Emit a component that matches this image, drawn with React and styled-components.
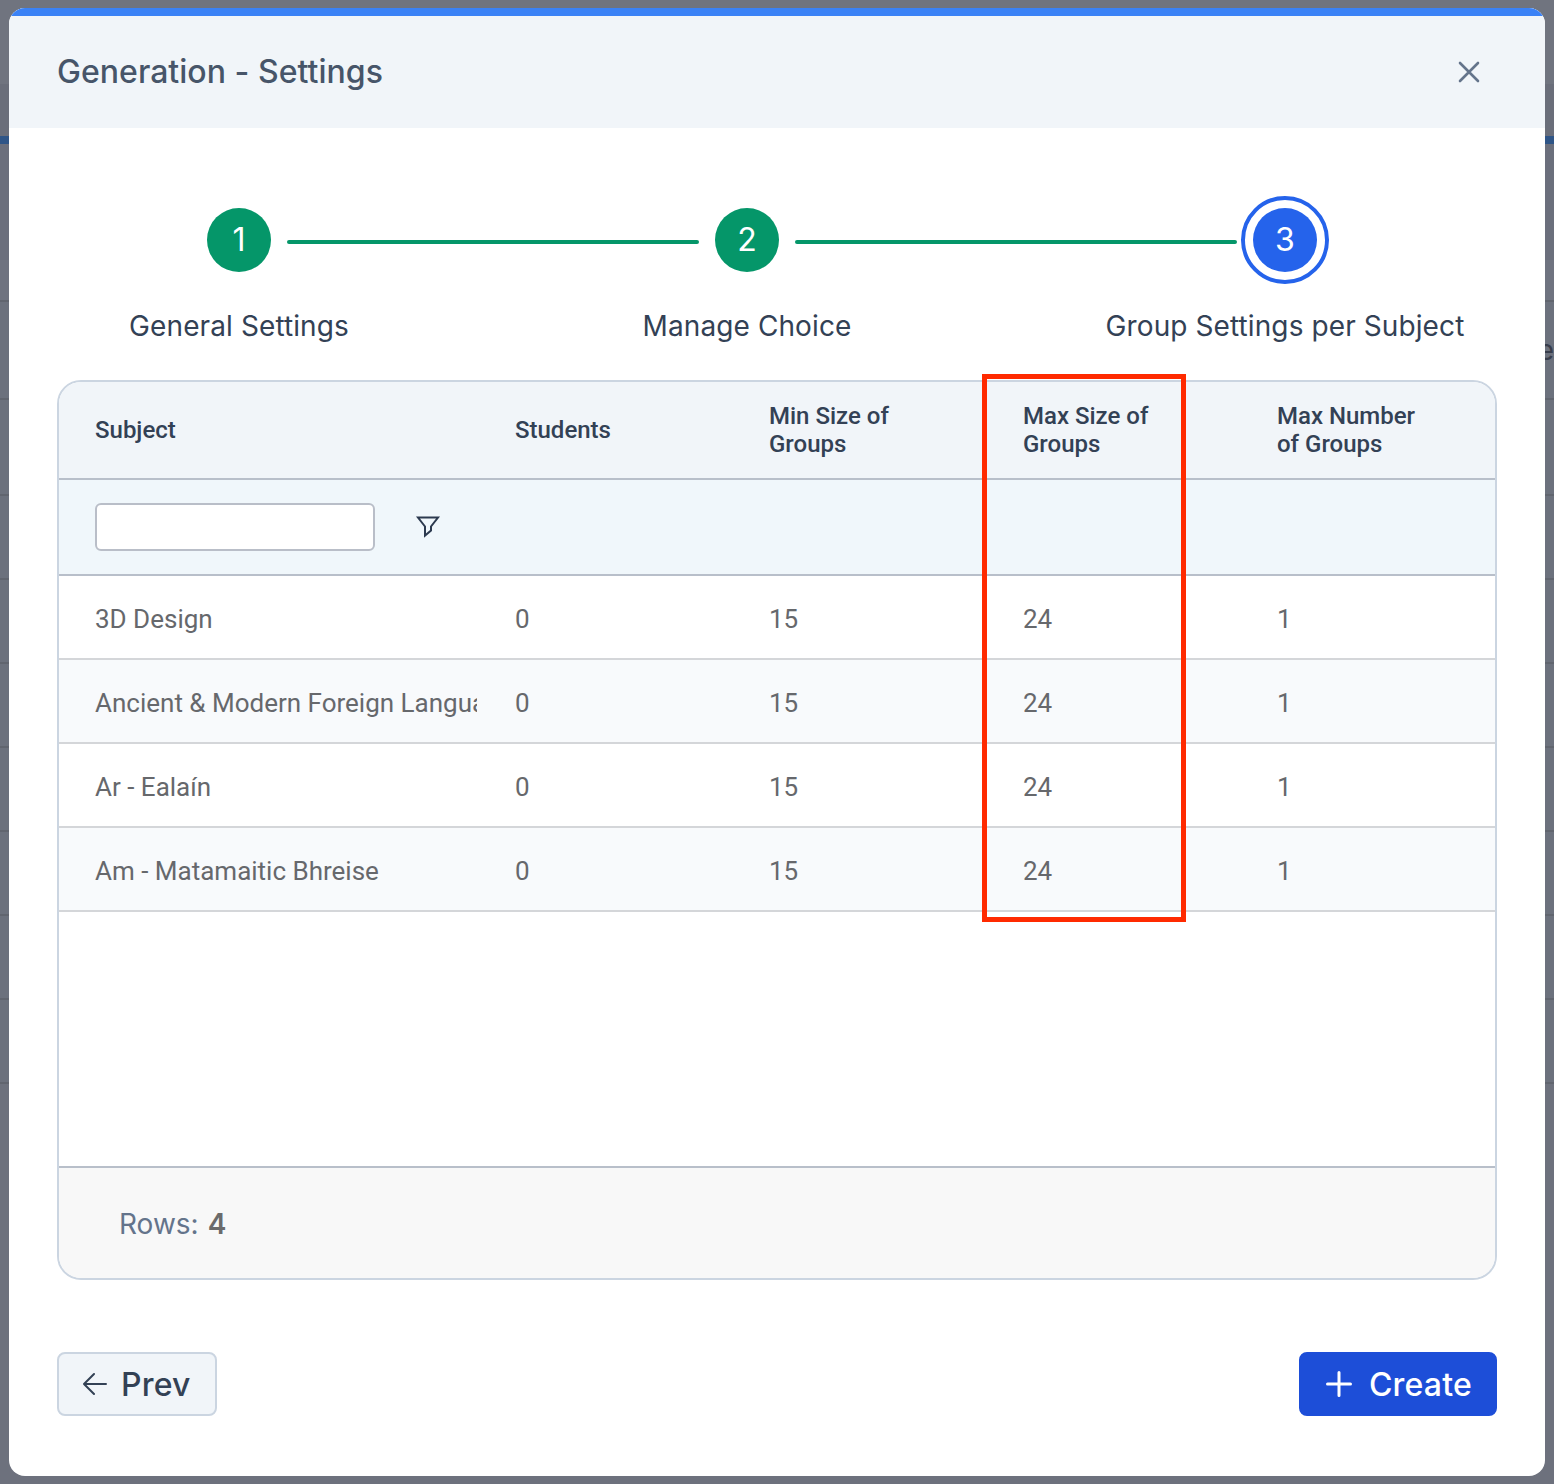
import React from "react";
import styled, { createGlobalStyle } from "styled-components";

const GlobalStyle = createGlobalStyle`
  html, body {
    margin: 0;
    padding: 0;
    background: #6c707c;
  }
  * {
    box-sizing: border-box;
  }
`;

const Page = styled.div`
  position: relative;
  width: 1554px;
  height: 1484px;
  overflow: hidden;
  font-family: Inter, "Liberation Sans", sans-serif;
`;

const Backdrop = styled.div`
  display: flex;
  flex-direction: column;
  height: 100%;
`;

const Band = styled.div`
  flex: none;
  height: ${props => props.$height}px;
  background: ${props => props.$color};
  border-bottom: ${props => (props.$line ? "2px solid #61656f" : "none")};
  display: flex;
  align-items: center;
  justify-content: flex-end;
  font-size: 28px;
  color: #383d4b;
`;

const Modal = styled.div`
  position: absolute;
  left: 9px;
  top: 8px;
  width: 1536px;
  height: 1468px;
  background: #fff;
  border-radius: 16px;
  overflow: hidden;
  display: flex;
  flex-direction: column;
`;

const ModalHeader = styled.header`
  flex: none;
  height: 120px;
  border-top: 8px solid #3b82f6;
  background: #f1f5f9;
  display: flex;
  align-items: center;
  justify-content: space-between;
  padding: 0 64px 0 48px;
`;

const Title = styled.h2`
  margin: 0 0 2px;
  font-size: 32px;
  font-weight: 500;
  letter-spacing: 0.03px;
  color: #475569;
`;

const CloseButton = styled.button`
  display: flex;
  padding: 0;
  border: 0;
  background: none;
  color: #64748b;
`;

const ModalBody = styled.div`
  flex: 1;
  display: flex;
  flex-direction: column;
  padding: 68px 48px 60px;
`;

const Track = styled.div`
  display: flex;
  align-items: center;
  height: 88px;
  padding-left: 150px;
`;

const Circle = styled.div`
  flex: none;
  width: 64px;
  height: 64px;
  padding-bottom: 2px;
  border-radius: 50%;
  display: flex;
  align-items: center;
  justify-content: center;
  background: ${props => props.$color};
  color: #fff;
  font-size: 32px;
`;

const Ring = styled.div`
  flex: none;
  width: 88px;
  height: 88px;
  margin-left: -12px;
  border: 4px solid #2563eb;
  border-radius: 50%;
  display: flex;
  align-items: center;
  justify-content: center;
`;

const Line = styled.div`
  flex: none;
  width: ${props => props.$width}px;
  height: 4px;
  margin: 4px 16px 0;
  border-radius: 2px;
  background: #059669;
`;

const Labels = styled.div`
  display: grid;
  grid-template-columns: 364px 652px 424px;
  margin-top: 24px;
  height: 60px;
`;

const Label = styled.div`
  text-align: center;
  white-space: nowrap;
  font-size: 28px;
  line-height: 36px;
  letter-spacing: 0.1px;
  color: #334155;
`;

const TableCard = styled.div`
  position: relative;
  height: 900px;
  margin-top: 12px;
  display: flex;
  flex-direction: column;
  border: 2px solid #cbd5e1;
  border-radius: 24px;
  font-family: Roboto, "Liberation Sans", sans-serif;
`;

const Row = styled.div`
  flex: none;
  display: grid;
  grid-template-columns: 420px repeat(4, 254px);
  align-items: center;
  height: ${props => props.$height}px;
  background: ${props => props.$bg};
  border-bottom: 2px solid ${props => props.$line};
  border-radius: ${props => (props.$top ? "22px 22px 0 0" : "0")};
`;

const HeadCell = styled.div`
  padding: 0 64px 0 36px;
  font-size: 24px;
  font-weight: 500;
  line-height: 28px;
  color: #334155;
`;

const Cell = styled.div`
  margin-right: 2px;
  padding: 4px 0 0 36px;
  overflow: hidden;
  white-space: nowrap;
  font-size: 26px;
  color: #66686c;
`;

const FilterCell = styled.div`
  grid-column: 1 / -1;
  display: flex;
  align-items: center;
  gap: 40px;
  padding-left: 36px;
`;

const FilterInput = styled.input`
  width: 280px;
  height: 48px;
  border: 2px solid #b9bec8;
  border-radius: 6px;
  background: #fff;
`;

const FilterIcon = styled.svg`
  display: block;
  color: #2c3a4f;
`;

const Empty = styled.div`
  flex: 1;
`;

const Footer = styled.div`
  flex: none;
  height: 112px;
  display: flex;
  align-items: center;
  padding: 2px 0 0 60px;
  background: #f8f8f8;
  border-top: 2px solid #b8bfca;
  border-radius: 0 0 22px 22px;
  font-family: Inter, "Liberation Sans", sans-serif;
  font-size: 28px;
  color: #64748b;
`;

const RowCount = styled.b`
  margin-left: 9px;
  font-weight: 600;
  color: #6b6b6b;
`;

const Highlight = styled.div`
  position: absolute;
  left: 923px;
  top: -8px;
  width: 204px;
  height: 548px;
  border: 5px solid #ff2a00;
  pointer-events: none;
`;

const Actions = styled.div`
  display: flex;
  justify-content: space-between;
  margin-top: 72px;
`;

const ActionButton = styled.button`
  height: 64px;
  display: flex;
  align-items: center;
  gap: ${props => props.$gap}px;
  padding: 0 ${props => props.$padEnd}px 0 ${props => props.$padStart}px;
  border-radius: 8px;
  border: 2px solid ${props => props.$border};
  background: ${props => props.$bg};
  color: ${props => props.$color};
  font-family: Inter, "Liberation Sans", sans-serif;
  font-size: 32px;
  font-weight: 500;
  letter-spacing: 0.2px;
`;

const bands = [
  { height: 84, color: "#70747f" },
  { height: 52, color: "#6a6e7a" },
  { height: 8, color: "#2f5587" },
  { height: 116, color: "#6b6f7c" },
  { height: 42, color: "#6f7380", line: true },
  { height: 98, color: "#6c717d", line: true, text: "e" },
  { height: 96, color: "#6c717d", line: true },
  { height: 84, color: "#6c717d", line: true },
  { height: 84, color: "#6c717d", line: true },
  { height: 84, color: "#6c717d", line: true },
  { height: 84, color: "#6c717d", line: true },
  { height: 84, color: "#6c717d", line: true },
  { height: 84, color: "#6c717d", line: true },
  { height: 84, color: "#6c717d", line: true },
  { height: 400, color: "#6d717d" }
];

const subjects = [
  "3D Design",
  "Ancient & Modern Foreign Languages",
  "Ar - Ealaín",
  "Am - Matamaitic Bhreise"
];

export default function App() {
  return (
    <Page>
      <GlobalStyle />
      <Backdrop>
        {bands.map((band, i) => (
          <Band key={i} $height={band.height} $color={band.color} $line={band.line}>
            {band.text}
          </Band>
        ))}
      </Backdrop>
      <Modal>
        <ModalHeader>
          <Title>Generation - Settings</Title>
          <CloseButton>
            <svg width="24" height="24" viewBox="0 0 24 24" fill="none" stroke="currentColor" strokeWidth="2.6" strokeLinecap="round">
              <path d="M3 3 L21 21 M21 3 L3 21" />
            </svg>
          </CloseButton>
        </ModalHeader>
        <ModalBody>
          <Track>
            <Circle $color="#059669">1</Circle>
            <Line $width={412} />
            <Circle $color="#059669">2</Circle>
            <Line $width={442} />
            <Ring>
              <Circle $color="#2563eb">3</Circle>
            </Ring>
          </Track>
          <Labels>
            <Label>General Settings</Label>
            <Label>Manage Choice</Label>
            <Label>Group Settings per Subject</Label>
          </Labels>
          <TableCard>
            <Row $height={98} $bg="#f1f5f9" $line="#b8bfca" $top>
              <HeadCell>Subject</HeadCell>
              <HeadCell>Students</HeadCell>
              <HeadCell>Min Size of Groups</HeadCell>
              <HeadCell>Max Size of Groups</HeadCell>
              <HeadCell>Max Number of Groups</HeadCell>
            </Row>
            <Row $height={96} $bg="#f0f7fb" $line="#b8bfca">
              <FilterCell>
                <FilterInput />
                <FilterIcon width="26" height="24" viewBox="0 0 26 24" fill="none" stroke="currentColor" strokeWidth="2">
                  <path d="M3 2.5 H23 L16 11.5 V15.5 L10 20.5 V11.5 Z" />
                </FilterIcon>
              </FilterCell>
            </Row>
            {subjects.map((subject, i) => (
              <Row key={subject} $height={84} $bg={i % 2 ? "#f8fafc" : "#fff"} $line="#d4d6d9">
                <Cell>{subject}</Cell>
                <Cell>0</Cell>
                <Cell>15</Cell>
                <Cell>24</Cell>
                <Cell>1</Cell>
              </Row>
            ))}
            <Empty />
            <Footer>
              Rows:<RowCount>4</RowCount>
            </Footer>
            <Highlight />
          </TableCard>
          <Actions>
            <ActionButton $padStart={24} $padEnd={24} $gap={14} $bg="#f1f5f9" $border="#cbd5e1" $color="#334155">
              <svg width="24" height="24" viewBox="0 0 24 24" fill="none" stroke="currentColor" strokeWidth="2" strokeLinecap="round" strokeLinejoin="round">
                <path d="M23 12 H1 M11 2 L1 12 L11 22" />
              </svg>
              Prev
            </ActionButton>
            <ActionButton $padStart={25} $padEnd={23} $gap={17} $bg="#1d4ed8" $border="#1d4ed8" $color="#fff">
              <svg width="26" height="26" viewBox="0 0 26 26" fill="none" stroke="currentColor" strokeWidth="3" strokeLinecap="round">
                <path d="M13 1.5 V24.5 M1.5 13 H24.5" />
              </svg>
              Create
            </ActionButton>
          </Actions>
        </ModalBody>
      </Modal>
    </Page>
  );
}
